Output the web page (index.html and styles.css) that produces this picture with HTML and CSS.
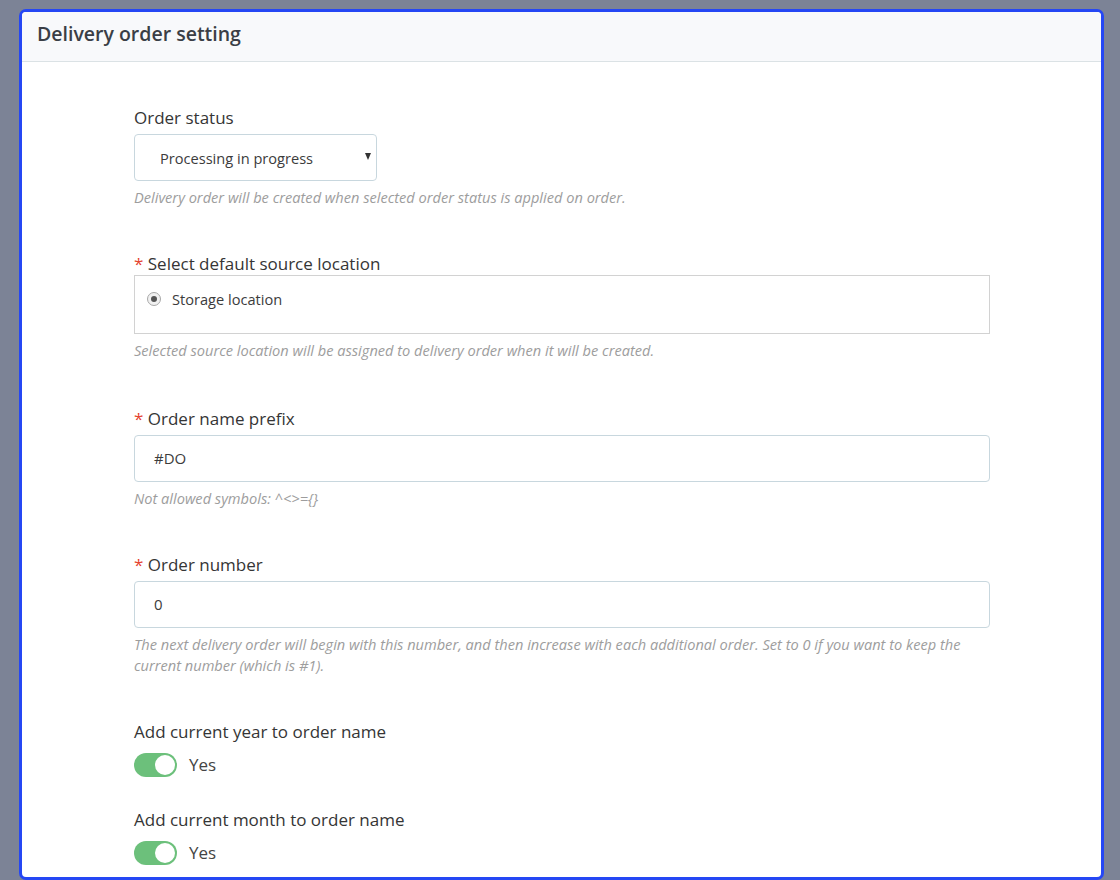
FILE: index.html
```html
<!DOCTYPE html>
<html lang="en">
<head>
<meta charset="utf-8">
<title>Delivery order setting</title>
<link rel="stylesheet" href="styles.css">
</head>
<body>
<div class="card">
  <div class="card-header">Delivery order setting</div>
  <div class="card-body">
    <form class="form">
      <div class="group">
        <label class="label">Order status</label>
        <div class="select">
          <span class="select-value">Processing in progress</span>
          <span class="caret"></span>
        </div>
        <p class="help">Delivery order will be created when selected order status is applied on order.</p>
      </div>

      <div class="group group-fieldset">
        <div class="legend"><span class="req">*</span> Select default source location</div>
        <div class="radio-box">
          <label class="radio-item">
            <span class="radio"><span class="radio-dot"></span></span>
            <span class="radio-text">Storage location</span>
          </label>
        </div>
        <p class="help">Selected source location will be assigned to delivery order when it will be created.</p>
      </div>

      <div class="group">
        <label class="label"><span class="req">*</span> Order name prefix</label>
        <div class="input">#DO</div>
        <p class="help">Not allowed symbols: ^&lt;&gt;={}</p>
      </div>

      <div class="group">
        <label class="label"><span class="req">*</span> Order number</label>
        <div class="input">0</div>
        <p class="help">The next delivery order will begin with this number, and then increase with each additional order. Set to 0 if you want to keep the current number (which is #1).</p>
      </div>

      <div class="group group-switch">
        <label class="label">Add current year to order name</label>
        <div class="switch-row">
          <span class="switch"><span class="knob"></span></span>
          <span class="switch-text">Yes</span>
        </div>
      </div>

      <div class="group group-switch">
        <label class="label">Add current month to order name</label>
        <div class="switch-row">
          <span class="switch"><span class="knob"></span></span>
          <span class="switch-text">Yes</span>
        </div>
      </div>
    </form>
  </div>
</div>
</body>
</html>
```

FILE: styles.css
```css
html, body {
  margin: 0;
  padding: 0;
}

body {
  background: #7c8396;
  font-family: "Open Sans", "Liberation Sans", Arial, sans-serif;
  color: #353535;
  height: 880px;
  overflow: hidden;
  padding: 9px 16px 0 19px;
  box-sizing: border-box;
}

.card {
  width: 1085px;
  height: 871px;
  box-sizing: border-box;
  border: 3px solid #2547f4;
  border-radius: 7px;
  background: #ffffff;
  overflow: hidden;
}

.card-header {
  background: #f8f9fb;
  border-bottom: 1px solid #dbe2e5;
  padding: 6px 15px 11px 15px;
  font-size: 19.5px;
  line-height: 32px;
  font-weight: 600;
  color: #3a3e46;
}

.card-body {
  padding: 44px 111px 0 112px;
}

.form {
  width: 856px;
}

.group {
  margin-bottom: 44px;
}

.group-fieldset {
  margin-bottom: 46px;
}

.label {
  display: block;
  font-size: 17px;
  line-height: 24px;
  margin-bottom: 4px;
  color: #353535;
}

.legend {
  font-size: 17px;
  line-height: 23px;
  color: #353535;
}

.req {
  color: #e5432f;
}

.select {
  width: 243px;
  height: 47px;
  box-sizing: border-box;
  border: 1px solid #c8d7de;
  border-radius: 4px;
  display: flex;
  align-items: center;
  justify-content: space-between;
  padding: 0 5px 0 25px;
  font-size: 14.6px;
  color: #3c3c3c;
}

.caret {
  width: 0;
  height: 0;
  border-left: 3px solid transparent;
  border-right: 3px solid transparent;
  border-top: 7px solid #333;
  margin-top: -2px;
}

.radio-box {
  height: 59px;
  box-sizing: border-box;
  border: 1px solid #d2d2d2;
  padding: 12px 12px 0 12px;
}

.radio-item {
  display: flex;
  align-items: center;
  gap: 11px;
  font-size: 14.6px;
  line-height: 22px;
  color: #3c3c3c;
}

.radio {
  width: 14px;
  height: 14px;
  box-sizing: border-box;
  border: 1px solid #a8a8a8;
  border-radius: 50%;
  background: #f1f1f1;
  display: flex;
  align-items: center;
  justify-content: center;
}

.radio-dot {
  width: 6px;
  height: 6px;
  border-radius: 50%;
  background: #555;
}

.input {
  height: 47px;
  box-sizing: border-box;
  border: 1px solid #c8d7de;
  border-radius: 4px;
  padding: 0 19px;
  font-size: 15px;
  line-height: 45px;
  color: #3c3c3c;
}

.help {
  margin: 6px 0 0 0;
  font-size: 14.6px;
  line-height: 21px;
  font-style: italic;
  color: #9d9d9d;
}

.group-switch {
  margin-bottom: 31px;
}

.group-switch .label {
  margin-bottom: 9px;
}

.switch-row {
  display: flex;
  align-items: center;
  gap: 12px;
  height: 24px;
}

.switch {
  width: 43px;
  height: 24px;
  box-sizing: border-box;
  border-radius: 12px;
  background: #6cc07b;
  display: flex;
  align-items: center;
  justify-content: flex-end;
  padding: 0 2px;
}

.knob {
  width: 20px;
  height: 20px;
  border-radius: 50%;
  background: #ffffff;
}

.switch-text {
  font-size: 17px;
  line-height: 24px;
  color: #444;
}
```
